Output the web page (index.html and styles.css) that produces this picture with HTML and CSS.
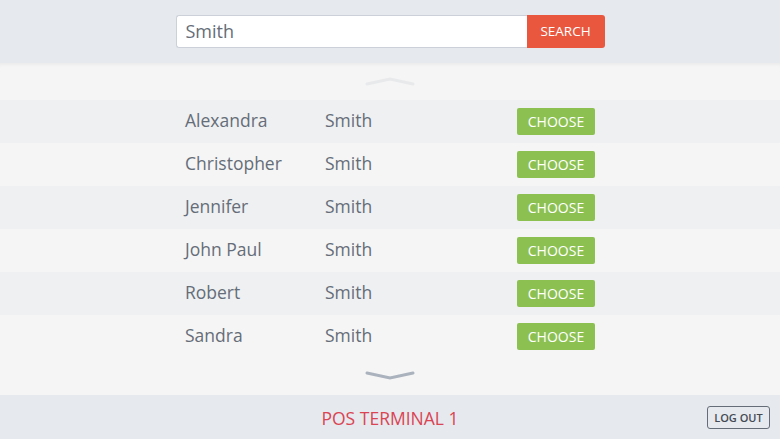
FILE: index.html
```html
<!DOCTYPE html>
<html lang="en">
<head>
    <meta charset="UTF-8">
    <meta name="viewport" content="width=device-width, initial-scale=1.0">
    <title>Customer search</title>
    <link rel="stylesheet" href="styles.css">
</head>
<body>
    <header class="top">
        <form class="search">
            <input type="text" class="search-input" value="Smith">
            <button type="button" class="search-btn">SEARCH</button>
        </form>
    </header>

    <main class="list">
        <div class="arrow arrow-up">
            <svg width="50" height="10" viewBox="0 0 50 10"><path d="M2 8 L25 3 L48 8" fill="none" stroke="#e8e9eb" stroke-width="3" stroke-linecap="round"/></svg>
        </div>

        <div class="rows">
            <div class="row">
                <span class="first">Alexandra</span><span class="last">Smith</span>
                <button class="choose">CHOOSE</button>
            </div>
            <div class="row">
                <span class="first">Christopher</span><span class="last">Smith</span>
                <button class="choose">CHOOSE</button>
            </div>
            <div class="row">
                <span class="first">Jennifer</span><span class="last">Smith</span>
                <button class="choose">CHOOSE</button>
            </div>
            <div class="row">
                <span class="first">John Paul</span><span class="last">Smith</span>
                <button class="choose">CHOOSE</button>
            </div>
            <div class="row">
                <span class="first">Robert</span><span class="last">Smith</span>
                <button class="choose">CHOOSE</button>
            </div>
            <div class="row">
                <span class="first">Sandra</span><span class="last">Smith</span>
                <button class="choose">CHOOSE</button>
            </div>
        </div>

        <div class="arrow arrow-down">
            <svg width="50" height="10" viewBox="0 0 50 10"><path d="M2 2 L25 7 L48 2" fill="none" stroke="#aab2bd" stroke-width="3" stroke-linecap="round"/></svg>
        </div>
    </main>

    <footer class="bottom">
        <span class="terminal">POS TERMINAL 1</span>
        <button class="logout">LOG OUT</button>
    </footer>
</body>
</html>
```
FILE: styles.css
```css
* {
    box-sizing: border-box;
}
body {
    margin: 0;
    font-family: "Open Sans", sans-serif;
    color: #656d78;
    background: #f5f5f5;
    height: 439px;
    display: flex;
    flex-direction: column;
}
button {
    font-family: inherit;
    cursor: pointer;
}
.top {
    height: 63px;
    background: #e6e9ed;
    display: flex;
    justify-content: center;
    padding-top: 15px;
}
.search {
    display: flex;
    width: 429px;
    height: 33px;
}
.search-input {
    flex: 1;
    border: 1px solid #ccd1d9;
    border-right: none;
    border-radius: 3px 0 0 3px;
    padding: 0 9px 2px;
    font-family: inherit;
    font-size: 18px;
    color: #656d78;
    background: #fff;
}
.search-btn {
    width: 78px;
    border: none;
    border-radius: 0 3px 3px 0;
    background: #e9573f;
    color: #fff;
    font-size: 13.5px;
    padding: 0 0 1px;
}
.list {
    flex: 1;
    display: flex;
    flex-direction: column;
    box-shadow: inset 0 4px 4px -3px rgba(0, 0, 0, 0.06);
}
.arrow {
    height: 37px;
    display: flex;
    justify-content: center;
}
.arrow-up {
    align-items: flex-end;
    padding-bottom: 14px;
}
.arrow-down {
    padding-top: 13px;
}
.row {
    height: 43px;
    display: flex;
    align-items: center;
    padding-left: 185px;
    font-size: 17.5px;
}
.row span {
    padding-bottom: 4px;
}
.row:nth-child(odd) {
    background: #eff0f2;
}
.first {
    width: 140px;
}
.last {
    width: 192px;
}
.choose {
    width: 78px;
    height: 27px;
    border: none;
    border-radius: 2px;
    background: #8cc152;
    color: #fff;
    font-size: 14px;
    padding: 0;
    margin-bottom: 1px;
}
.bottom {
    height: 44px;
    background: #e6e9ed;
    display: flex;
    align-items: center;
    justify-content: center;
    position: relative;
}
.terminal {
    color: #da4453;
    font-size: 17.5px;
    padding-top: 2px;
}
.logout {
    position: absolute;
    right: 10px;
    top: 11px;
    width: 63px;
    height: 23px;
    border: 1px solid #656d78;
    border-radius: 3px;
    background: transparent;
    color: #434a54;
    font-size: 11px;
    font-weight: 600;
    padding: 0;
}
```
